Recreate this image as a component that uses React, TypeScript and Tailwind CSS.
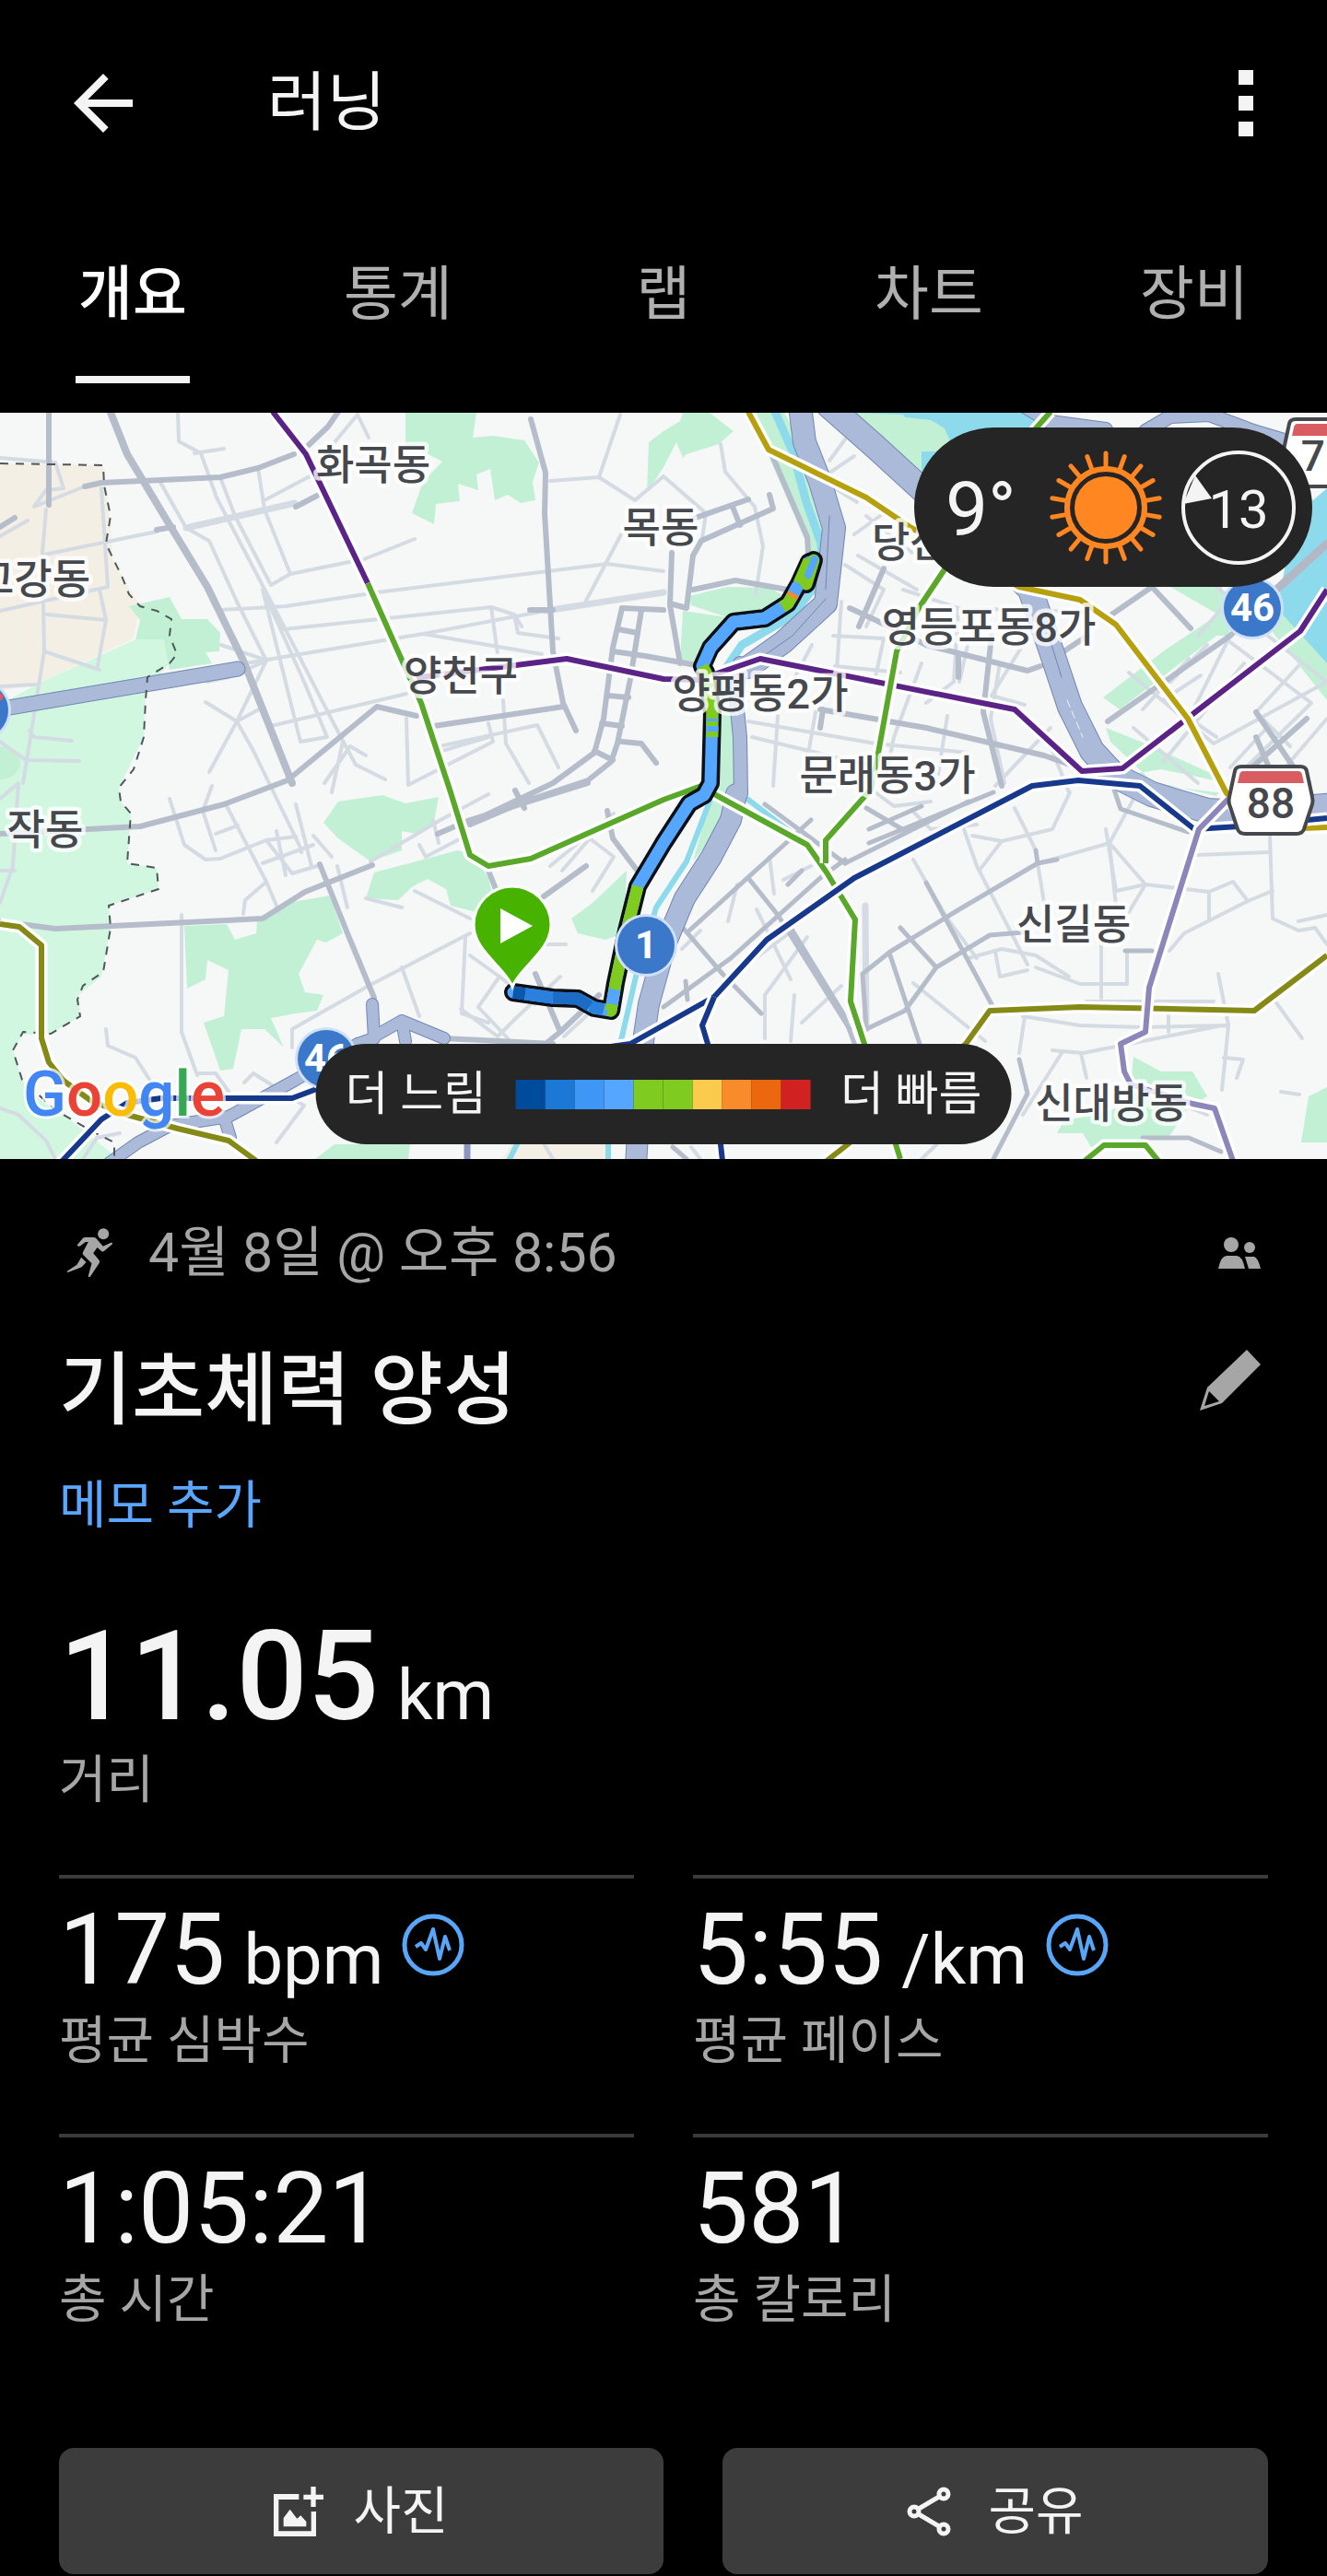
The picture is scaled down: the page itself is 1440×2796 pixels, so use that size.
const MINOR_ROADS = [
  // west
  "M193 447L194 479L218 492L235 540L303 670L363 787L386 830L418 846",
  "M211 492L243 487M172 520L202 573L227 587L257 653L289 717L257 783L227 838M257 783L281 770",
  "M280 508L287 553L315 623L379 610M239 518L255 560L294 635L315 623M395 607L450 585M287 543L340 515",
  "M48 602L170 577M239 662L310 658L409 643L659 612L720 620M294 660L308 683L533 659L558 667L562 687L606 693",
  "M266 720L459 688L592 663M459 688L588 710M294 788L441 753M223 762L257 783L275 815L326 920L327 925",
  "M673 450L650 518L597 522M650 518L689 543L720 517M674 580L636 652M533 659L540 710M558 667L566 680",
  "M0 497L60 502L69 530L50 532L37 550L92 528M0 582L30 565M110 530L117 637L0 663M50 553L46 600L48 707L32 807L25 850",
  "M48 707L108 727M108 640L115 673L106 723M51 667L115 673M0 745L39 743M32 793L37 800L78 804M0 805L28 825L86 826",
  "M363 480L388 450L400 475M441 780L443 852L535 805L530 785M468 812L583 787L606 833M546 760L549 807L574 850M480 815L530 800",
  "M225 740L248 735L290 717L240 700M285 640L330 740L355 800L326 805L285 640M352 850L380 810L397 820M372 805L360 860",
  // south west
  "M197 993L197 1120L214 1167M214 1165L234 1165L257 1197M115 1117L117 1135L147 1148L163 1173",
  "M184 867L200 917L223 933L239 932L289 912L321 908M230 853L220 880L234 923M246 875L289 957L266 977L264 992M234 905L258 896",
  "M289 912L317 948L344 940M289 957L303 990M285 937L340 917M300 902L310 950M340 907L360 930M321 873L338 940",
  "M397 975L436 985M450 967L510 997M317 1137L317 1117L400 1070L510 1013M436 1050L455 1103M505 1017L501 1100L530 1110",
  "M510 1037L542 1060L519 1093L551 1127M542 1060L580 1090M500 1095L540 1125L560 1105L608 1060M612 1125L650 1090M590 1025L614 1025",
  "M402 935L478 890L530 862M455 917L462 930L500 910M470 890L476 915M597 940L666 883M643 967L666 930L640 910L610 945M366 940L377 985",
  "M0 867L20 850L14 940L0 980M0 945L16 945M0 1203L20 1210L50 1238L60 1258M90 1258L105 1235L130 1230M265 1175L275 1165L330 1200L300 1240",
  // north east
  "M917 477L900 500M882 515L930 545M890 520L927 495M959 557L927 580M782 482L787 512L819 550L828 593L820 645M720 517L766 557L762 585",
  "M931 603L995 640M940 560L990 600M917 613L959 640L940 680M913 653L908 727M904 690L959 693L950 735M906 723L977 730M881 700L860 740M1041 740L1050 700",
  "M844 777L839 853M885 773L872 847M812 783L950 807L1051 817M816 800L940 830M1028 777L1018 840M1000 720L970 800L960 850M1110 700L1076 755L1112 765",
  "M1040 660L1035 740L1005 763M980 640L1040 660L1200 665M1085 720L1075 780L1090 850M1140 790L1080 853M1140 810L1160 860",
  "M1225 730L1317 807L1440 740M1262 827L1350 720M1303 733L1262 760L1320 800M1372 793L1335 833M1335 697L1423 763L1345 840M1372 687L1440 740M1409 723L1363 773L1400 810",
  "M1290 780L1335 690M1240 770L1290 715M1230 790L1300 850M1380 850L1440 780M1290 610L1335 650L1300 690M1310 700L1270 740",
  // south east
  "M991 933L1028 997L1060 1040M1046 900L1060 940L1115 1047M1124 1050L1172 1068L1223 1068L1223 1032M1195 1023L1195 1083M1200 900L1211 967L1243 960L1312 968L1338 957L1354 978L1285 1013L1269 1032",
  "M1312 968L1312 997M1204 917L1211 983M1126 937L1152 930L1204 915L1234 860M1204 915L1243 960L1225 990M1377 850L1378 907L1381 997L1409 1010L1427 1007L1440 1025M1409 1000L1440 993",
  "M1299 928L1377 925M1354 978L1381 967M1126 937L1133 980M1101 877L1124 923M1055 907L1087 913L1142 900L1161 860M1064 943L1087 913M990 880L1010 900L1060 895M950 860L970 875L1010 870",
  "M1110 1103L1172 1113L1239 1115L1333 1113L1326 1183M1106 1143L1112 1103M1142 1140L1175 1143L1326 1113M1152 1143L1133 1173L1110 1210M1173 1143L1179 1170",
  "M1322 1057L1333 1113M1381 1083L1413 1127M1179 1087L1317 1087M1328 1148L1349 1150L1342 1170M1051 1040L1087 1030L1124 1037L1160 1060M1085 1060L1115 1053M1080 1033L1085 1060",
  "M991 1067L1069 1130M821 987L858 1063M876 1017L830 1080L830 1127M862 1080L858 1130M913 1070L870 1110M780 1070L860 1010M800 960L790 1000M835 930L840 970M850 955L880 940M740 1030L760 1010M1390 1185L1410 1188M1268 1100L1268 1120M1285 1200L1310 1210M1060 1200L1000 1258M750 1245L760 1258M560 1190L600 1258",
];

const MAJOR_ROADS = [
  "M53 447L53 548M0 572L16 562M92 528L110 524L239 518L280 508L319 493M335 483L356 463L367 447M170 575L188 572M321 550L344 538",
  "M576 455L592 513L591 557L600 707L611 763L625 793M575 662L600 662",
  "M0 905L152 897L243 873L312 847L409 767L452 777M471 788L611 767",
  "M0 1000L60 1008L285 997L331 968L404 939M347 938L377 1013L406 1083M475 905L510 890L638 850M530 945L540 970M590 973L636 940M581 1057L608 1120L592 1133M608 1120L650 1080M482 1127L600 1133",
  "M675 660L665 703L655 780L645 817L600 850L516 890M696 662L684 737L670 807L663 827L638 847L569 870L510 895M559 858L569 877",
  "M675 660L720 662M671 683L692 687M665 707L700 712L761 723M660 755L682 757M653 785L675 788M645 815L665 825M675 805L696 807L712 828M659 880L665 910L693 947",
  "M752 563L812 542M761 587L839 552L835 537M752 640L798 630L872 643M729 600L727 657L738 720M752 603L745 660M727 655L745 660M795 550L803 570M761 587L752 603",
  "M839 497L876 583L878 610M959 617L932 680M922 660L950 673L1005 700L1115 728L1129 723M1040 710L1040 735",
  "M890 770L1005 790L1133 820L1175 835M1076 690L1067 773L1087 853M893 770L890 790",
  "M1202 783L1335 690L1345 680M1363 773L1404 833L1420 850M1354 837L1418 780M1250 637L1292 682M1202 670L1250 637M1150 710L1180 690M1363 800L1380 840M1404 833L1350 890",
];

const DISTRICT_ROADS = [
  "M943 915L1078 860M917 937L1051 870M720 1093L793 1040L890 953L917 933M729 993L784 1057L826 1100M748 1010L853 915L880 890M812 953L844 993L922 1117",
  "M1005 958L1076 1090M1147 933L1126 937L1041 987L966 1033L936 1057L940 1117L982 1097L1016 1050L1074 1015L1110 1012M977 1007L1016 1050M966 1037L998 1133M1124 923L1126 937",
  "M1221 1032L1250 1032M1209 857L1216 878L1289 903M830 873L917 937M940 877L979 900M943 900L1000 875M855 960L870 945M744 1065L746 1085",
  "M1106 1150L1115 1187L1078 1258M860 1010L915 1100L928 1135M730 1245L745 1258M1240 1235L1290 1235L1325 1250",
];

const WOODS = [
  "M140 658L184 648L197 672L225 672L239 687L238 707L223 708L230 720L184 727L178 694L147 694L152 673Z",
  "M440 448H517L513 475L535 473L569 478L585 502L578 523L581 543L565 546L551 537L537 543L532 509L517 515L519 532L497 525L499 544L473 547L471 569L447 557L459 523L480 501L459 490L440 483Z",
  "M704 480L720 468L738 457L741 448H770L796 468L780 482L745 493L741 497L734 480L720 507L702 535Z",
  "M816 448H851L869 480L881 527L892 553L906 600L895 640L872 640L874 587L835 497Z",
  "M748 647L789 637L835 638L862 653L812 667L789 670L750 657ZM741 663L789 670L761 707L754 723L738 717Z",
  "M922 448L970 500L1000 520V480L980 450Z",
  "M1270 637L1325 632L1335 690L1320 690L1215 770L1197 757L1265 705L1322 667ZM1390 665L1440 720V760L1380 685Z",
  "M1200 790L1243 807L1331 847L1320 864L1250 848L1205 805ZM1200 845L1280 855L1335 862L1332 850L1260 835Z",
  "M780 780L796 760L798 850L780 900L752 935L770 870Z",
  "M367 870L415 863L440 872L476 865L471 892L452 905L436 902V923L402 935L367 910L351 893Z",
  "M406 947L459 933L496 923L514 927L530 953L535 973L517 990L489 983L484 965L464 954L448 962L432 977L397 975Z",
  "M200 1005L246 1003L255 1020L278 1013L279 1000L312 980L358 972L372 1013L354 1023L344 1020L324 1057L331 1077L351 1080L344 1097L321 1100L294 1105L308 1137L287 1117L262 1117L253 1160L239 1162L221 1110L243 1103L248 1053L225 1042L223 1063L203 1073Z",
  "M680 945L677 1013L657 1020L627 1013L620 997L643 980ZM363 1242H445L443 1258H342Z",
  "M1230 1147L1260 1163H1294L1310 1190L1289 1203L1269 1233L1184 1245L1175 1230H1147L1154 1217L1225 1200ZM1420 1190L1440 1180V1240H1412Z",
];

const EXPRESSWAYS = [
  { d: "M803 720L799 760L803 800L804 862", width: 14 },
  { d: "M868 440L873 480L890 523L905 573L901 610L896 655L850 697L812 724", width: 24 },
  { d: "M799 862L793 890L772 930L743 975L722 1025L704 1090L698 1130L690 1265", width: 22 },
  { d: "M899 440L950 485L1010 540L1070 590L1118 640L1142 710L1161 767L1185 815L1210 842L1250 862L1310 880L1350 882L1450 874", width: 26 },
  { d: "M1110 440L1140 458L1200 466M1243 468L1270 452L1312 450L1360 468L1400 480", width: 14 },
  { d: "M10 768L258 726", width: 15 },
  { d: "M404 1090L406 1127L388 1133L321 1172L248 1212L184 1222L150 1240L119 1262M406 1125L436 1108L482 1127M243 1212L250 1235M436 1108L440 1130", width: 12 },
];

const SUBWAY = [
  { color: "#5b2386", d: "M296 447L332 493L399 633" },
  { color: "#5b2386", d: "M441 737L528 726L615 715L720 737L757 738L825 715L1101 770L1174 837L1218 834L1411 685L1440 640" },
  { color: "#b7a00e", d: "M812 447L834 488L940 540L989 573L1106 637L1172 651L1211 678L1289 780L1345 888L1413 899L1440 898" },
  { color: "#5aa82a", d: "M399 633L439 723L457 763L489 860L510 928L530 940L576 932L720 868L761 853L777 863L876 917L897 947L928 998L923 1087L938 1133L977 1258" },
  { color: "#5aa82a", d: "M1140 447L1124 465L1025 618L997 660L973 707L952 823L945 857L896 912L896 937" },
  { color: "#5aa82a", d: "M1177 1260L1198 1243H1243L1257 1260" },
  { color: "#17398c", d: "M60 1268L110 1215L138 1197L175 1192H317L349 1180L684 1133L775 1082L832 1020L927 953L1120 853L1170 847L1237 853L1296 900L1345 897L1440 888" },
  { color: "#17398c", d: "M775 1082L762 1113L768 1133L782 1242L784 1260" },
  { color: "#858a17", d: "M0 1003L21 1006L45 1026V1127L53 1153L69 1173L99 1195L138 1210L193 1225L248 1238L278 1260" },
  { color: "#858a17", d: "M1440 1037L1361 1097L1172 1093L1074 1097L1048 1133L920 1242L897 1260" },
  { color: "#8c86bb", d: "M1333 867L1301 900L1247 1072L1243 1120L1216 1133L1220 1163L1227 1177L1294 1198L1318 1203L1338 1260" },
];

const DISTRICT_BORDER =
  "M0 503L112 505L113 527L120 560L115 590L122 605L132 625L140 645L152 658L170 663L186 672L184 690L192 710L184 720L160 735L158 760L156 800L145 835L129 855L131 870L142 883L138 937L170 942L172 965L118 983L120 1007L112 1055L90 1070L84 1085L87 1103L55 1122L25 1120L14 1140L24 1172L60 1205L100 1228L124 1240V1258";

const ROUTE =
  "M557 1077L600 1083L627 1084L645 1094L663 1097L668 1067L680 1010L692 962L720 915L748 872L764 863L771 850L773 773L766 730L762 723L771 703L796 675L830 671L855 655L867 634L878 610";

const ROUTE_PIECES = [
  { color: "#0b57ae", d: "M557 1077L570 1079" },
  { color: "#2a80dd", d: "M570 1079L600 1083M640 1092L655 1096" },
  { color: "#1c6cc6", d: "M600 1083L627 1084L640 1092" },
  { color: "#80cb20", d: "M660 1096L663 1097L668 1067L680 1010L692 962" },
  { color: "#55a6ff", d: "M664 1090L667 1074" },
  { color: "#80cb20", d: "M773 800L773 773L766 730L762 723" },
  { color: "#55a6ff", d: "M773 794L773 788M773 783L773 780" },
  { color: "#55a6ff", d: "M764 719L771 703L796 675L830 671L849 659" },
  { color: "#80cb20", d: "M849 659L855 655L861 645" },
  { color: "#f58a2c", d: "M859 648L862 643" },
  { color: "#55a6ff", d: "M861 644L866 635" },
  { color: "#80cb20", d: "M867 633L878 608" },
];

const PLACES = [
  { name: "화곡동", x: 405, y: 521 },
  { name: "목동", x: 717, y: 589 },
  { name: "고강동", x: 36, y: 645 },
  { name: "양천구", x: 500, y: 750 },
  { name: "작동", x: 49, y: 917 },
  { name: "당산동", x: 1008, y: 605 },
  { name: "영등포동8가", x: 1073, y: 697 },
  { name: "양평동2가", x: 825, y: 769 },
  { name: "문래동3가", x: 963, y: 858 },
  { name: "신길동", x: 1165, y: 1020 },
  { name: "신대방동", x: 1206, y: 1214 },
];

const PACE_COLORS = [
  "bg-[#004b9c]",
  "bg-[#1b78d4]",
  "bg-[#3f97f5]",
  "bg-[#55a6ff]",
  "bg-[#80cb20]",
  "bg-[#80cb20]",
  "bg-[#fbcb4e]",
  "bg-[#f98b2a]",
  "bg-[#eb680e]",
  "bg-[#d22121]",
];

const TABS = ["개요", "통계", "랩", "차트", "장비"];

const STATS = [
  { value: "175", unit: "bpm", label: "평균 심박수", chart: true },
  { value: "5:55", unit: "/km", label: "평균 페이스", chart: true },
  { value: "1:05:21", unit: "", label: "총 시간", chart: false },
  { value: "581", unit: "", label: "총 칼로리", chart: false },
];

function RoundShield({ x, y, label }: { x: number; y: number; label: string }) {
  return (
    <g>
      <circle cx={x} cy={y} r="34" fill="#cfe0fb" />
      <circle cx={x} cy={y} r="31" fill="#3b78c9" />
      <text x={x} y={y + 14} textAnchor="middle" fontSize="42" fontWeight="700" fill="#fff">
        {label}
      </text>
    </g>
  );
}

function HexShield({ x, y, label }: { x: number; y: number; label: string }) {
  return (
    <g transform={`translate(${x} ${y})`}>
      <path
        d="M-32 -37H32Q38 -37 39 -32L45 -4Q46 0 45 4L36 31Q34 36 28 36H-28Q-34 36 -36 31L-45 4Q-46 0 -45 -4L-39 -32Q-38 -37 -32 -37Z"
        fill="#fff"
        stroke="#45484c"
        strokeWidth="4"
      />
      <path d="M-30 -32H30Q33 -32 34 -28L36 -19H-36L-34 -28Q-33 -32 -30 -32Z" fill="#d95d60" />
      <text y="19" textAnchor="middle" fontSize="46" fontWeight="500" fill="#45484c">
        {label}
      </text>
    </g>
  );
}

function RouteMap() {
  return (
    <svg viewBox="0 448 1440 810" className="block w-full" role="img" aria-label="러닝 경로 지도">
      <rect y="448" width="1440" height="810" fill="#f6f7f7" />
      <path d="M0 503L112 505L115 527L120 573L122 607L133 627L152 657L145 693L41 742L0 750Z" fill="#f4efe4" />
      <path d="M555 1242H661V1258H545Z" fill="#f4efe4" />
      <path
        d="M147 694H179L184 720L158 750L156 800L129 855L131 870L142 883L138 937L170 942L172 965L118 983L120 1007L110 1060L85 1080L87 1103L55 1122L25 1123L14 1140L28 1183L78 1217L129 1258H0V765L41 742Z"
        fill="#d1f7e1"
      />
      <ellipse cy="828" rx="22" ry="18" fill="#c2f0d5" />
      <path d="M905 448H1130L1110 530H1010L950 480Z" fill="#8edaed" />
      <path d="M1405 560L1440 530V725L1408 690L1385 665Z" fill="#8edaed" />
      {WOODS.map((d) => (
        <path key={d} d={d} fill="#c2f0d5" />
      ))}
      <path d="M974 452L1010 456L1025 465L1036 490H1000L985 470Z" fill="#c2f0d5" />
      <g fill="none" strokeLinecap="round" strokeLinejoin="round">
        <path d="M838 440L860 490L875 545L891 590L893 625L860 668L805 700L783 732L782 760" stroke="#8edaed" strokeWidth="9" />
        <path d="M770 870L745 935L712 985L690 1060L660 1190V1260M812 868L860 905M562 1240L552 1260" stroke="#8edaed" strokeWidth="6" />
        <g stroke="#d4dbe2" strokeWidth="4">
          {MINOR_ROADS.map((d) => (
            <path key={d} d={d} />
          ))}
          <path d="M202 573L320 546M592 663L720 643M939 983L940 1117" strokeWidth="7" />
        </g>
        <g stroke="#b5bdcb">
          <path d="M117 440L138 493L186 573L225 637L264 717L317 850" strokeWidth="8" />
          {MAJOR_ROADS.map((d) => (
            <path key={d} d={d} strokeWidth="6" />
          ))}
          {DISTRICT_ROADS.map((d) => (
            <path key={d} d={d} strokeWidth="5" />
          ))}
          <path d="M1385 640L1440 590" stroke="#b4b7c6" strokeWidth="9" />
        </g>
        {EXPRESSWAYS.map((road) => (
          <path key={road.d} d={road.d} stroke="#7187b2" strokeWidth={road.width + 2} />
        ))}
        {EXPRESSWAYS.map((road) => (
          <path key={road.d} d={road.d} stroke="#aabad8" strokeWidth={road.width} />
        ))}
        <path d="M896 650L860 690L820 718M900 560L896 640M1138 690L1152 735" stroke="#7187b2" strokeWidth="1" />
        <path d="M1085 604L1110 640M1158 760L1175 800" stroke="#f6f7f7" strokeWidth="1" strokeDasharray="8 5" />
        <path d="M507 1240V1260" stroke="#8c95c4" strokeWidth="7" />
      </g>
      <path d={DISTRICT_BORDER} fill="none" stroke="#50575c" strokeWidth="2" strokeDasharray="9 8" />

      {SUBWAY.map((line) => (
        <g key={line.d} fill="none" strokeLinejoin="round">
          <path d={line.d} stroke="#fff" strokeWidth="13" />
          <path d={line.d} stroke={line.color} strokeWidth="6" />
        </g>
      ))}

      <g fill="none" strokeLinecap="round" strokeLinejoin="round">
        <path d={ROUTE} stroke="#0b1016" strokeWidth="20" />
        <path d="M875 634L883 608" stroke="#0b1016" strokeWidth="20" />
        <path d={ROUTE} stroke="#55a6ff" strokeWidth="13" />
        <path d="M875 634L883 608" stroke="#80cb20" strokeWidth="13" />
        {ROUTE_PIECES.map((piece) => (
          <path key={piece.d} d={piece.d} stroke={piece.color} strokeWidth="13" strokeLinecap="butt" />
        ))}
        <path d="M877 624L884 607" stroke="#55a6ff" strokeWidth="8" />
      </g>

      <g fontSize="45" fontWeight="500" textAnchor="middle" fill="#45494e" stroke="#fff" strokeWidth="9" strokeLinejoin="round" strokeOpacity="0.8">
        {PLACES.map((place) => (
          <text key={place.name} x={place.x} y={place.y} className="[paint-order:stroke]">
            {place.name}
          </text>
        ))}
      </g>

      <RoundShield x={1359} y={660} label="46" />
      <RoundShield x={354} y={1149} label="46" />
      <RoundShield x={701} y={1026} label="1" />
      <circle cx="-22" cy="771" r="34" fill="#cfe0fb" />
      <circle cx="-22" cy="771" r="31" fill="#3b78c9" />
      <path d="M0 752L4 755L2 760H0Z" fill="#d95d60" />
      <HexShield x={1379} y={869} label="88" />
      <HexShield x={1438} y={492} label="70" />

      <path
        d="M556 1071C548 1050 514 1032 514 1004A42 42 0 0 1 598 1004C598 1032 564 1050 556 1071Z"
        fill="#47b300"
        stroke="#fff"
        strokeWidth="3"
      />
      <path d="M543 986L578 1005L543 1024Z" fill="#fff" />

      <g fontFamily="Roboto, sans-serif" fontSize="69" fontWeight="500" stroke="#fff" strokeWidth="6" strokeOpacity="0.7">
        <text x="25" y="1211" className="[paint-order:stroke]">
          <tspan fill="#4285f4">G</tspan>
          <tspan fill="#ea4335">o</tspan>
          <tspan fill="#fbbc05">o</tspan>
          <tspan fill="#4285f4">g</tspan>
          <tspan fill="#34a853">l</tspan>
          <tspan fill="#ea4335">e</tspan>
        </text>
      </g>
    </svg>
  );
}

function SunIcon() {
  return (
    <svg viewBox="-62 -62 124 124" className="size-[124px]" aria-hidden="true">
      <g stroke="#ff8620" strokeWidth="5" strokeLinecap="round">
        {Array.from({ length: 18 }, (_, i) => (
          <line key={i} y1="-44" y2="-59" transform={`rotate(${i * 20})`} />
        ))}
      </g>
      <circle r="42" fill="none" stroke="#ff8620" strokeWidth="6" />
      <circle r="34" fill="#ff8620" />
    </svg>
  );
}

function WindDial() {
  return (
    <div className="relative flex size-[124px] items-center justify-center">
      <svg viewBox="-62 -62 124 124" className="absolute inset-0" aria-hidden="true">
        <circle r="60" fill="none" stroke="#f4f4f4" strokeWidth="4" />
        <path d="M-47 -35L-29 -10L-60 -4Z" fill="#f4f4f4" />
      </svg>
      <span className="relative pt-1 text-[58px] leading-[64px]">13</span>
    </div>
  );
}

function WaveIcon() {
  return (
    <svg viewBox="0 0 68 68" className="size-[68px]" fill="none" stroke="#58a6f8" strokeLinejoin="round" aria-hidden="true">
      <circle cx="34" cy="34" r="31" strokeWidth="5" />
      <path d="M15 36L21 32L26 39L34 17L41 49L47 25L52 40" strokeWidth="4" />
    </svg>
  );
}

function Header() {
  return (
    <header>
      <div className="flex h-[224px] items-center px-16">
        <button type="button" aria-label="뒤로" className="size-24">
          <svg viewBox="0 0 24 24" className="size-24" fill="#f4f4f4" aria-hidden="true">
            <path d="M20 11H7.83l5.59-5.59L12 4l-8 8 8 8 1.41-1.41L7.83 13H20v-2z" />
          </svg>
        </button>
        <h1 className="ml-[130px] text-[70px] leading-[80px] font-normal">러닝</h1>
        <button type="button" aria-label="더보기" className="ml-auto flex w-12 flex-col items-center gap-3">
          <span className="size-4 bg-[#f4f4f4]" />
          <span className="size-4 bg-[#f4f4f4]" />
          <span className="size-4 bg-[#f4f4f4]" />
        </button>
      </div>
      <nav role="tablist" className="grid grid-cols-5 pb-8">
        {TABS.map((tab, i) => (
          <button
            key={tab}
            type="button"
            role="tab"
            aria-selected={i === 0}
            className={`flex h-48 flex-col items-center text-[64px] leading-[80px] ${i === 0 ? "font-medium text-white" : "text-[#b0b0b0]"}`}
          >
            <span className="flex flex-1 items-center pt-2">{tab}</span>
            <span className={`h-2 w-[124px] ${i === 0 ? "bg-[#f4f4f4]" : ""}`} />
          </button>
        ))}
      </nav>
    </header>
  );
}

export default function App() {
  return (
    <div className="min-h-screen bg-black font-[Roboto,'Noto_Sans_CJK_KR',sans-serif] text-[#f4f4f4]">
      <Header />

      <section className="relative overflow-hidden">
        <RouteMap />
        <div className="absolute top-4 right-4 flex h-[173px] items-center gap-5 rounded-full bg-[#252525] pr-[18px] pl-[34px]">
          <span className="w-[92px] pt-1 text-[82px] leading-[96px]">9°</span>
          <SunIcon />
          <WindDial />
        </div>
        <div className="absolute bottom-4 left-1/2 flex h-[109px] -translate-x-1/2 items-center gap-8 rounded-full bg-[#252525] px-8 text-[51px] leading-[64px] whitespace-nowrap">
          <span>더 느림</span>
          <span className="flex">
            {PACE_COLORS.map((color, i) => (
              <span key={i} className={`size-8 ${color}`} />
            ))}
          </span>
          <span>더 빠름</span>
        </div>
      </section>

      <main className="px-16 pt-[66px]">
        <div className="flex h-[72px] items-center text-[59px] leading-[72px] text-[#a6a6a6]">
          <svg viewBox="36 32 152 168" className="ml-2 h-14 w-[51px]" fill="#a6a6a6" aria-hidden="true">
            <circle cx="156" cy="54" r="18" />
            <path d="M71 90L89 68Q92 65 97 65H124Q131 65 135 71L155 94L181 82Q188 81 184 88L158 110Q153 113 149 109L136 98L123 117L142 139Q145 143 143 148L113 193Q107 197 107 190L118 150L91 123Q86 118 90 112L107 80H98L79 94Q73 96 71 90Z" />
            <path d="M84 130L100 146L87 160Q84 163 80 164L41 179Q36 178 38 175L70 154Z" />
          </svg>
          <span className="ml-[38px]">4월 8일 @ 오후 8:56</span>
          <svg viewBox="0 0 46 34" className="mr-2 ml-auto h-[34px] w-[46px]" fill="#a6a6a6" aria-hidden="true">
            <circle cx="14" cy="8" r="8" />
            <circle cx="34" cy="11" r="6" />
            <path d="M0 34Q3 20 9 20H20Q26 20 29 34ZM29 21H39Q43 22 46 34H33Z" />
          </svg>
        </div>

        <div className="mt-[58px] flex h-28 items-center justify-between">
          <h2 className="text-[86px] leading-[112px] font-medium">기초체력 양성</h2>
          <button type="button" aria-label="이름 편집" className="mr-2 pb-6">
            <svg viewBox="0 0 66 66" className="size-[66px]" fill="#a6a6a6" fillRule="evenodd" aria-hidden="true">
              <path d="M51 0L66 16L24 58L0 66L8 41ZM10 45L5 61L21 56Z" />
            </svg>
          </button>
        </div>
        <a href="#memo" className="mt-7 block w-fit text-[56px] leading-[80px] text-[#58a6ff]">
          메모 추가
        </a>

        <p className="mt-[66px] flex h-40 items-baseline gap-5 text-[136px] leading-[160px] font-medium">
          11.05
          <span className="text-[76px] font-normal">km</span>
        </p>
        <p className="text-[56px] leading-[64px] text-[#a6a6a6]">거리</p>

        <dl className="mt-[71px] grid grid-cols-2 gap-x-16">
          {STATS.map((stat) => (
            <div key={stat.label} className="flex h-[281px] flex-col-reverse justify-end border-t-4 border-[#3b3b3b] pt-3.5">
              <dt className="text-[56px] leading-[68px] text-[#a6a6a6]">{stat.label}</dt>
              <dd className="flex h-32 items-baseline text-[107px] leading-[128px]">
                {stat.value}
                {stat.unit && <span className="ml-5 text-[76px]">{stat.unit}</span>}
                {stat.chart && (
                  <button type="button" aria-label={`${stat.label} 차트`} className="mt-6 ml-5 self-start">
                    <WaveIcon />
                  </button>
                )}
              </dd>
            </div>
          ))}
        </dl>

        <div className="mt-[60px] flex gap-16 text-[56px] leading-[64px]">
          <button type="button" className="flex h-[137px] flex-[656] items-center justify-center gap-8 rounded-2xl bg-[#3c3c3c]">
            <svg viewBox="62 48 162 162" className="size-[54px]" fill="#f4f4f4" aria-hidden="true">
              <path d="M62 72H144V90H78V193H184V129H200V210H62Z" />
              <path d="M183 48H199V74H224V90H199V114H183V90H159V74H183Z" />
              <path d="M94 178V150L115 122L138 152L150 142L168 162V178Z" />
            </svg>
            사진
          </button>
          <button type="button" className="flex h-[137px] flex-[592] items-center justify-center gap-10 rounded-2xl bg-[#3c3c3c]">
            <svg viewBox="0 0 48 54" className="h-[54px] w-12" fill="none" stroke="#f4f4f4" strokeWidth="5" aria-hidden="true">
              <circle cx="40" cy="8" r="5" />
              <circle cx="8" cy="27" r="5" />
              <circle cx="40" cy="46" r="5" />
              <path d="M13 24L35 11M13 30L35 43" />
            </svg>
            공유
          </button>
        </div>
      </main>
    </div>
  );
}
